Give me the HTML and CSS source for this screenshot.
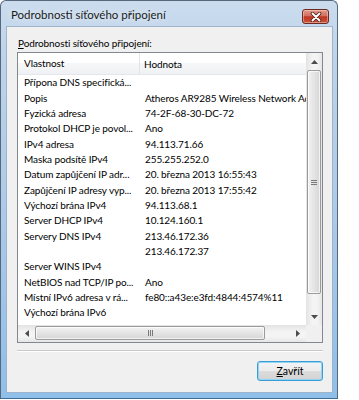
FILE: index.html
```html
<!DOCTYPE html>
<html lang="cs">
<head>
  <meta charset="UTF-8" />
  <title>Podrobnosti síťového připojení</title>
  <link rel="stylesheet" href="styles.css">
</head>
<body>
  <div class="window">
    <div class="titlebar">
      <span class="title">Podrobnosti síťového připojení</span>
      <button class="close-btn" aria-label="Zavřít">
        <svg width="12" height="10" viewBox="0 0 12 10">
          <path d="M2.5 1.5 L9.5 8.5 M9.5 1.5 L2.5 8.5" stroke="#4a1a14" stroke-width="3.6" stroke-linecap="round" />
          <path d="M2.5 1.5 L9.5 8.5 M9.5 1.5 L2.5 8.5" stroke="#fff" stroke-width="2" stroke-linecap="round" />
        </svg>
      </button>
    </div>

    <div class="client">
      <div class="list-label"><u>P</u>odrobnosti síťového připojení:</div>

      <div class="listbox">
        <div class="list-content">
          <div class="list-header">
            <div class="col-name hdr">Vlastnost</div>
            <div class="col-value hdr">Hodnota</div>
          </div>
          <div class="rows">
            <div class="row"><span class="col-name">Přípona DNS specifická...</span><span class="col-value"></span></div>
            <div class="row"><span class="col-name">Popis</span><span class="col-value">Atheros AR9285 Wireless Network Adapter</span></div>
            <div class="row"><span class="col-name">Fyzická adresa</span><span class="col-value">74-2F-68-30-DC-72</span></div>
            <div class="row"><span class="col-name">Protokol DHCP je povol...</span><span class="col-value">Ano</span></div>
            <div class="row"><span class="col-name">IPv4 adresa</span><span class="col-value">94.113.71.66</span></div>
            <div class="row"><span class="col-name">Maska podsítě IPv4</span><span class="col-value">255.255.252.0</span></div>
            <div class="row"><span class="col-name">Datum zapůjčení IP adr...</span><span class="col-value">20. března 2013 16:55:43</span></div>
            <div class="row"><span class="col-name">Zapůjčení IP adresy vyp...</span><span class="col-value">20. března 2013 17:55:42</span></div>
            <div class="row"><span class="col-name">Výchozí brána IPv4</span><span class="col-value">94.113.68.1</span></div>
            <div class="row"><span class="col-name">Server DHCP IPv4</span><span class="col-value">10.124.160.1</span></div>
            <div class="row"><span class="col-name">Servery DNS IPv4</span><span class="col-value">213.46.172.36</span></div>
            <div class="row"><span class="col-name"></span><span class="col-value">213.46.172.37</span></div>
            <div class="row"><span class="col-name">Server WINS IPv4</span><span class="col-value"></span></div>
            <div class="row"><span class="col-name">NetBIOS nad TCP/IP po...</span><span class="col-value">Ano</span></div>
            <div class="row"><span class="col-name">Místní IPv6 adresa v rá...</span><span class="col-value">fe80::a43e:e3fd:4844:4574%11</span></div>
            <div class="row"><span class="col-name">Výchozí brána IPv6</span><span class="col-value"></span></div>
            <div class="row"><span class="col-name">Servery DNS IPv6</span><span class="col-value">fec0:0:0:ffff::1%1</span></div>
          </div>
        </div>

        <div class="vscroll">
          <div class="arrow-btn">
            <svg width="7" height="4" viewBox="0 0 7 4"><path d="M0 4 L3.5 0 L7 4 Z" fill="#4d4d4d" /></svg>
          </div>
          <div class="vtrack">
            <div class="vthumb">
              <svg width="6" height="5" viewBox="0 0 6 5"><path d="M0 0.5 H6 M0 2.5 H6 M0 4.5 H6" stroke="#7a7a7a" stroke-width="1" /></svg>
            </div>
          </div>
          <div class="arrow-btn">
            <svg width="7" height="4" viewBox="0 0 7 4"><path d="M0 0 L3.5 4 L7 0 Z" fill="#4d4d4d" /></svg>
          </div>
        </div>

        <div class="hscroll">
          <div class="arrow-btn">
            <svg width="4" height="7" viewBox="0 0 4 7"><path d="M4 0 L0 3.5 L4 7 Z" fill="#4d4d4d" /></svg>
          </div>
          <div class="htrack">
            <div class="hthumb">
              <svg width="5" height="6" viewBox="0 0 5 6"><path d="M0.5 0 V6 M2.5 0 V6 M4.5 0 V6" stroke="#7a7a7a" stroke-width="1" /></svg>
            </div>
          </div>
          <div class="arrow-btn">
            <svg width="4" height="7" viewBox="0 0 4 7"><path d="M0 0 L4 3.5 L0 7 Z" fill="#4d4d4d" /></svg>
          </div>
        </div>

        <div class="corner"></div>
      </div>

      <div class="separator"></div>

      <div class="buttons">
        <button class="btn default-btn"><u>Z</u>avřít</button>
      </div>
    </div>
  </div>
</body>
</html>
```

FILE: styles.css
```css
body {
  margin: 0;
  padding: 0;
  background: #fff;
  font-family: Lato, 'Liberation Sans', sans-serif;
  font-size: 10px;
  letter-spacing: -0.1px;
  color: #000;
}

.window {
  width: 338px;
  height: 399px;
  box-sizing: border-box;
  border: 1px solid #56687c;
  border-bottom-color: #3f6d96;
  border-radius: 6px 6px 0 0;
  background: linear-gradient(to bottom, #cbdcee 0%, #bdd3ea 15%, #a9c8e8 60%, #8fbfe9 100%);
  padding: 0 5px 6px 6px;
  display: flex;
  flex-direction: column;
}

.titlebar {
  height: 26px;
  display: flex;
  justify-content: space-between;
  align-items: flex-start;
  margin: 0 -5px 0 -6px;
}

.title {
  margin: 7px 0 0 10px;
  font-size: 11.5px;
  letter-spacing: 0;
  color: #1a1a1a;
  text-shadow: 0 0 6px rgba(255,255,255,0.9);
}

.close-btn {
  width: 27px;
  height: 15px;
  margin: 8px 8px 0 0;
  padding: 0;
  border: 1px solid #6b2b22;
  border-radius: 3px;
  background: linear-gradient(to bottom, #e2998c 0%, #d4705f 45%, #bd3522 52%, #cc5338 100%);
  display: flex;
  align-items: center;
  justify-content: center;
  box-shadow: inset 0 0 0 1px rgba(255,220,210,0.45);
}

.client {
  flex: 1;
  background: #f0f0f0;
  box-shadow: 0 0 0 1px #9db4cb;
  padding: 9px 9px 0 10px;
}

.list-label {
  padding-left: 1px;
  height: 16px;
  line-height: 15px;
}

.listbox {
  width: 306px;
  height: 291px;
  box-sizing: border-box;
  border: 1px solid #828790;
  background: #fff;
  display: grid;
  grid-template-columns: 288px 16px;
  grid-template-rows: 272px 17px;
}

.list-content {
  overflow: hidden;
}

.list-header {
  height: 22px;
  display: flex;
  align-items: center;
  background: linear-gradient(to bottom, #fff 0%, #fff 45%, #f6f7f9 50%, #eff1f4 100%);
  border-bottom: 1px solid #e3e6ea;
  box-sizing: border-box;
}

.col-name {
  width: 122px;
  flex: none;
  padding-left: 6px;
  box-sizing: border-box;
  white-space: nowrap;
  overflow: hidden;
}

.col-value {
  padding-left: 5px;
  white-space: nowrap;
}

.hdr.col-name {
  border-right: 1px solid #e1e4e8;
  height: 100%;
  line-height: 21px;
}

.hdr.col-value {
  padding-left: 4px;
}

.rows {
  padding-top: 0.3px;
}

.row {
  display: flex;
  height: 15.33px;
  line-height: 15.33px;
}

.vscroll {
  display: flex;
  flex-direction: column;
  background: linear-gradient(to right, #e3e3e3, #f4f4f4 40%, #f4f4f4 70%, #e6e6e6);
}

.arrow-btn {
  height: 17px;
  flex: none;
  display: flex;
  align-items: center;
  justify-content: center;
}

.vtrack {
  flex: 1;
  padding: 0 0 0 1px;
}

.vthumb {
  height: 224px;
  width: 14px;
  box-sizing: border-box;
  border: 1px solid #9b9b9b;
  border-radius: 2px;
  background: linear-gradient(to right, #f2f2f2, #e4e4e4 50%, #d6d6d6);
  box-shadow: inset 0 0 0 1px rgba(255,255,255,0.7);
  display: flex;
  align-items: center;
  justify-content: center;
}

.hscroll {
  display: flex;
  background: linear-gradient(to bottom, #e3e3e3, #f4f4f4 40%, #f4f4f4 70%, #e6e6e6);
}

.hscroll .arrow-btn {
  height: auto;
  width: 17px;
}

.htrack {
  flex: 1;
  padding-top: 1px;
}

.hthumb {
  width: 230px;
  height: 14px;
  box-sizing: border-box;
  border: 1px solid #9b9b9b;
  border-radius: 2px;
  background: linear-gradient(to bottom, #f2f2f2, #e4e4e4 50%, #d6d6d6);
  box-shadow: inset 0 0 0 1px rgba(255,255,255,0.7);
  display: flex;
  align-items: center;
  justify-content: center;
}

.corner {
  background: #f0f0f0;
}

.separator {
  width: 306px;
  margin-top: 7px;
  border-top: 1px solid #c9c9c9;
  border-bottom: 1px solid #fff;
}

.buttons {
  display: flex;
  justify-content: flex-end;
  width: 306px;
  margin-top: 9px;
}

.btn {
  width: 66px;
  height: 20px;
  padding: 0;
  font-family: Lato, 'Liberation Sans', sans-serif;
  font-size: 10.5px;
  color: #000;
  border: 1px solid #3c9cd6;
  border-radius: 3px;
  background: linear-gradient(to bottom, #f4f4f4 0%, #ececec 48%, #dcdcdc 52%, #d2d2d2 100%);
  box-shadow: inset 0 0 0 1px #8fd6f6;
}
```
